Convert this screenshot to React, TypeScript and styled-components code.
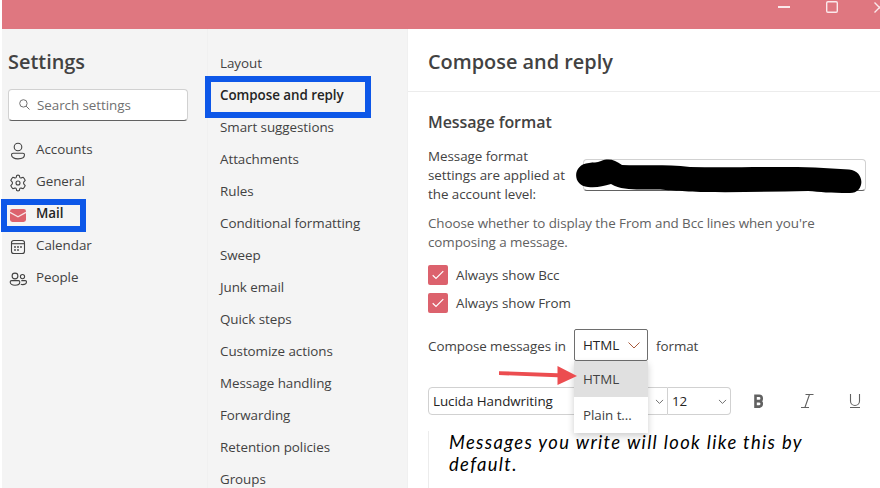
import React, { useState } from 'react';
import styled, { createGlobalStyle, css } from 'styled-components';

const GlobalStyle = createGlobalStyle`
  * {
    box-sizing: border-box;
  }
  body {
    margin: 0;
    overflow: hidden;
    background: #fff;
    color: #424242;
    font-family: 'Open Sans', 'Noto Sans', sans-serif;
    font-size: 13.4px;
    letter-spacing: -0.05px;
  }
  h1, h2, p {
    margin: 0;
  }
`;

const Window = styled.div`
  position: relative;
  display: grid;
  grid-template-rows: 29px 459px;
  width: 880px;
  height: 488px;
  padding-left: 2px;
  overflow: hidden;
`;

const TitleBar = styled.header`
  display: flex;
  justify-content: flex-end;
  background: #df7780;
  overflow: hidden;

  svg {
    flex: none;
    width: 108px;
    height: 20px;
  }
`;

const Body = styled.div`
  display: grid;
  grid-template-columns: 206px 200px 1fr;
`;

const Sidebar = styled.aside`
  padding: 20px 20px 0 6px;
  background: #f4f4f4;
  border-right: 1px solid #f0f0f0;
`;

const Heading = styled.h1`
  height: 26px;
  line-height: 26px;
  font-size: 19.9px;
  font-weight: 600;
  letter-spacing: 0;
  white-space: nowrap;
`;

const SearchBox = styled.div`
  display: flex;
  align-items: center;
  gap: 7px;
  width: 180px;
  height: 32px;
  margin-top: 14px;
  padding-left: 10px;
  border: 1px solid #d1d1d1;
  border-bottom-color: #616161;
  border-radius: 4px;
  background: #fff;
  color: #707070;

  svg {
    margin-top: -1px;
  }
`;

const SideNav = styled.nav`
  margin-top: 12px;
`;

const SideItem = styled.div<{ active?: boolean }>`
  display: flex;
  align-items: center;
  gap: 8px;
  height: 32px;
  padding-left: 1px;

  svg {
    flex: none;
    position: relative;
    top: 2px;
  }

  ${(props) =>
    props.active &&
    css`
      color: #242424;
      font-weight: 600;
    `}
`;

const SubNav = styled.nav`
  padding: 18px 0 0 12px;
  background: #f4f4f4;
  border-right: 1px solid #f0f0f0;
`;

const SubItem = styled.div<{ active?: boolean }>`
  height: 32px;
  line-height: 32px;
  white-space: nowrap;

  ${(props) =>
    props.active &&
    css`
      color: #242424;
      font-weight: 600;
    `}
`;

const Main = styled.main`
  display: grid;
  grid-template-rows: 63px 1fr;
  min-width: 0;
  background: #fff;
`;

const MainHeader = styled.div`
  padding: 20px 0 0 20px;
  border-bottom: 1px solid #ececec;
`;

const Content = styled.section`
  padding: 19px 0 0 20px;
`;

const SectionTitle = styled.h2`
  height: 22px;
  line-height: 22px;
  font-size: 16px;
  font-weight: 600;
`;

const AccountRow = styled.div`
  display: flex;
  align-items: flex-start;
  gap: 13px;
  margin-top: 14px;
`;

const AccountLabel = styled.p`
  width: 142px;
  line-height: 19px;
  white-space: nowrap;
`;

const AccountField = styled.div`
  position: relative;
  width: 283px;
  height: 32px;
  margin-top: 12px;
  border: 1px solid #d1d1d1;
  border-bottom-color: #616161;
  border-radius: 4px;

  svg {
    position: absolute;
    left: -9px;
    top: -2px;
  }
`;

const Hint = styled.p`
  margin-top: 10px;
  line-height: 19px;
  color: #616161;
  letter-spacing: -0.07px;
  white-space: nowrap;
`;

const CheckRow = styled.div`
  display: flex;
  align-items: center;
  gap: 8px;
  height: 20px;
  margin-top: 8px;
`;

const CheckList = styled.div`
  margin-top: 13px;
`;

const CheckBox = styled.span`
  display: grid;
  place-items: center;
  width: 20px;
  height: 20px;
  border-radius: 2px;
  background: #dc626d;
`;

const FormatRow = styled.div`
  display: flex;
  align-items: center;
  height: 32px;
  margin-top: 16px;
  white-space: nowrap;
`;

const FormatLabel = styled.span<{ width?: number }>`
  width: ${(props) => (props.width ? `${props.width}px` : 'auto')};
  padding-top: 2px;
`;

const Select = styled.div`
  position: relative;
  display: flex;
  align-items: center;
  justify-content: space-between;
  width: 74px;
  height: 32px;
  margin-right: 8px;
  padding: 0 6px 0 8px;
  border: 1px solid #6e6e6e;
  border-radius: 2px;
  color: #242424;
`;

const Menu = styled.div`
  position: absolute;
  z-index: 2;
  top: 31px;
  left: -1px;
  width: 74px;
  background: #fff;
  box-shadow: 0 3px 7px rgba(0, 0, 0, 0.2);
`;

const MenuItem = styled.div<{ active?: boolean }>`
  height: 36px;
  padding-left: 9px;
  line-height: 36px;
  color: #424242;
  background: ${(props) => (props.active ? '#e0e0e0' : '#fff')};
`;

const Toolbar = styled.div`
  display: flex;
  align-items: center;
  height: 28px;
  margin-top: 26px;
`;

const Combo = styled.div<{ width: number; side: 'left' | 'right' }>`
  display: flex;
  align-items: center;
  justify-content: space-between;
  width: ${(props) => props.width}px;
  height: 28px;
  padding: 0 3px 0 4px;
  border: 1px solid #d1d1d1;
  border-radius: ${(props) => (props.side === 'left' ? '4px 0 0 4px' : '0 4px 4px 0')};
  border-left-width: ${(props) => (props.side === 'left' ? 1 : 0)}px;
  color: #242424;
`;

const Tools = styled.div`
  display: flex;
  margin-left: 18px;
  gap: 28px;
`;

const Editor = styled.div`
  height: 57px;
  margin-top: 16px;
  padding: 0 0 0 20px;
  border-left: 1px solid #ececec;
`;

const Sample = styled.p`
  color: #000;
  font-family: 'Lucida Handwriting', Lato, cursive;
  font-size: 18.4px;
  font-style: italic;
  line-height: 22px;
  letter-spacing: 1.35px;
  white-space: nowrap;
`;

const Frame = styled.div<{ x: number; y: number; w: number; h: number }>`
  position: absolute;
  left: ${(props) => props.x}px;
  top: ${(props) => props.y}px;
  width: ${(props) => props.w}px;
  height: ${(props) => props.h}px;
  border: 6px solid #0d57e8;
`;

const Arrow = styled.svg`
  position: absolute;
  z-index: 3;
  left: 498px;
  top: 364px;
`;

function Chevron({ size, color }: { size: number; color: string }) {
  return (
    <svg width={size} height={size} viewBox="0 0 14 14" fill="none">
      <path d="M1.5 4.5 7 10l5.5-5.5" stroke={color} strokeWidth={14 / size} />
    </svg>
  );
}

function SideIcon({ name }: { name: string }) {
  const line = { fill: 'none', stroke: '#424242', strokeWidth: 1.1 };
  return (
    <svg width="19" height="18" viewBox="0 0 19 18">
      {name === 'Accounts' && (
        <g {...line}>
          <circle cx="9" cy="5" r="3.8" />
          <path d="M4.2 11.2h9.6c1 0 1.7.7 1.7 1.6 0 2.5-2.7 4.1-6.5 4.1s-6.5-1.6-6.5-4.1c0-.9.7-1.6 1.7-1.6Z" />
        </g>
      )}
      {name === 'General' && (
        <g {...line} strokeLinejoin="round">
          <path d="M7.7 1.4Q9 .9 10.3 1.4L10.7 3.2Q11.2 4.1 12.2 3.9L14.2 3.3Q15.5 4.5 16.2 6.4L14.9 7.8Q14.1 9 14.9 10.2L16.2 11.6Q15.5 13.5 14.2 14.7L12.2 14.1Q11.2 13.9 10.7 14.8L10.3 16.6Q9 17.1 7.7 16.6L7.3 14.8Q6.8 13.9 5.8 14.1L3.8 14.7Q2.5 13.5 1.8 11.6L3.1 10.2Q3.9 9 3.1 7.8L1.8 6.4Q2.5 4.5 3.8 3.3L5.8 3.9Q6.8 4.1 7.3 3.2Z" />
          <circle cx="9" cy="9" r="2" />
        </g>
      )}
      {name === 'Mail' && (
        <g>
          <rect x="1" y="3" width="16" height="13" rx="2.4" fill="#dc626d" />
          <path d="m1 6.4 8 4.4 8-4.4" fill="none" stroke="#f7e3e5" strokeWidth="1.2" />
        </g>
      )}
      {name === 'Calendar' && (
        <g {...line}>
          <rect x="2.5" y="2.5" width="13" height="13" rx="2.3" />
          <path d="M2.5 5.7h13" />
          <g fill="#424242" stroke="none">
            <circle cx="6" cy="9" r=".9" />
            <circle cx="9" cy="9" r=".9" />
            <circle cx="12" cy="9" r=".9" />
            <circle cx="6" cy="12" r=".9" />
            <circle cx="9" cy="12" r=".9" />
          </g>
        </g>
      )}
      {name === 'People' && (
        <g {...line}>
          <circle cx="6" cy="6" r="2.9" />
          <circle cx="13.5" cy="6.6" r="2.1" />
          <path d="M2.5 10.6h7c.8 0 1.3.5 1.3 1.3 0 2-1.9 3.3-4.8 3.3s-4.8-1.3-4.8-3.3c0-.8.5-1.3 1.3-1.3ZM12.3 10.6h4c.7 0 1.2.5 1.2 1.2 0 1.8-1.6 2.8-3.9 2.8-.7 0-1.3-.1-1.8-.3" />
        </g>
      )}
    </svg>
  );
}

const sections = ['Accounts', 'General', 'Mail', 'Calendar', 'People'];

const mailPages = [
  'Layout',
  'Compose and reply',
  'Smart suggestions',
  'Attachments',
  'Rules',
  'Conditional formatting',
  'Sweep',
  'Junk email',
  'Quick steps',
  'Customize actions',
  'Message handling',
  'Forwarding',
  'Retention policies',
  'Groups',
];

function App() {
  const [section, setSection] = useState('Mail');
  const [page, setPage] = useState('Compose and reply');

  return (
    <>
      <GlobalStyle />
      <Window>
        <TitleBar>
          <svg viewBox="0 0 108 20" fill="none" stroke="#fbe9eb" strokeWidth="1.4">
            <path d="M6 7h12" strokeWidth="2" />
            <rect x="54.7" y="1.7" width="10.6" height="10.6" rx="1.2" />
            <path d="m102.5 2.5 10 10m0-10-10 10" />
          </svg>
        </TitleBar>
        <Body>
          <Sidebar>
            <Heading>Settings</Heading>
            <SearchBox>
              <svg width="11" height="11" viewBox="0 0 11 11" fill="none" stroke="#707070">
                <circle cx="4.4" cy="4.4" r="3.7" />
                <path d="m7.1 7.1 3.4 3.4" />
              </svg>
              Search settings
            </SearchBox>
            <SideNav>
              {sections.map((s) => (
                <SideItem key={s} active={s === section} onClick={() => setSection(s)}>
                  <SideIcon name={s} />
                  {s}
                </SideItem>
              ))}
            </SideNav>
          </Sidebar>
          <SubNav>
            {mailPages.map((p) => (
              <SubItem key={p} active={p === page} onClick={() => setPage(p)}>
                {p}
              </SubItem>
            ))}
          </SubNav>
          <Main>
            <MainHeader>
              <Heading>Compose and reply</Heading>
            </MainHeader>
            <Content>
              <SectionTitle>Message format</SectionTitle>
              <AccountRow>
                <AccountLabel>
                  Message format
                  <br />
                  settings are applied at
                  <br />
                  the account level:
                </AccountLabel>
                <AccountField>
                  {/* account address is blacked out */}
                  <svg width="290" height="36" viewBox="0 0 290 36">
                    <path d="M14 5C18 4 22 5 26 3 34 0 40 2 47 7 65 8 90 6 115 9 160 10 200 8 240 9.5L274 11.5C291 13 290 36 274 35 255 35 245 34 233 33 200 33.5 165 34.5 130 34 105 33.5 95 32 80 31.5 62 31 48 33 36 26 28 28 22 30 13 29-3 28-3 6 14 5Z" />
                  </svg>
                </AccountField>
              </AccountRow>
              <Hint>
                Choose whether to display the From and Bcc lines when you're
                <br />
                composing a message.
              </Hint>
              <CheckList>
                {['Always show Bcc', 'Always show From'].map((label) => (
                  <CheckRow key={label}>
                    <CheckBox>
                      <svg width="12" height="10" viewBox="0 0 12 10" fill="none">
                        <path d="M.7 5.3 4 8.5 11.3 1.2" stroke="#fff" strokeWidth="1.2" />
                      </svg>
                    </CheckBox>
                    {label}
                  </CheckRow>
                ))}
              </CheckList>
              <FormatRow>
                <FormatLabel width={146}>Compose messages in</FormatLabel>
                <Select>
                  HTML
                  <Chevron size={14} color="#a85a3c" />
                  <Menu>
                    <MenuItem active>HTML</MenuItem>
                    <MenuItem>Plain t...</MenuItem>
                  </Menu>
                </Select>
                <FormatLabel>format</FormatLabel>
              </FormatRow>
              <Toolbar>
                <Combo width={240} side="left">
                  Lucida Handwriting
                  <Chevron size={9} color="#707070" />
                </Combo>
                <Combo width={63} side="right">
                  12
                  <Chevron size={9} color="#707070" />
                </Combo>
                <Tools>
                  <svg width="20" height="20" viewBox="0 0 20 20" fill="none" stroke="#616161" strokeWidth="2.6">
                    <path d="M6.5 4.8v10.8h4a2.8 2.8 0 0 0 0-5.5H6.5h3.6a2.6 2.6 0 0 0 0-5.3Z" />
                  </svg>
                  <svg width="20" height="20" viewBox="0 0 20 20" fill="none" stroke="#616161" strokeWidth="1.1">
                    <path d="M8.5 3.5h8M4 16.5h8M12.5 3.5l-4.6 13" />
                  </svg>
                  <svg width="20" height="20" viewBox="0 0 20 20" fill="none" stroke="#616161" strokeWidth="1.1">
                    <path d="M5.5 3v7a4.5 4.5 0 0 0 9 0V3M5 16.5h10" />
                  </svg>
                </Tools>
              </Toolbar>
              <Editor>
                <Sample>
                  Messages you write will look like this by
                  <br />
                  default.
                </Sample>
              </Editor>
            </Content>
          </Main>
        </Body>
        <Frame x={1} y={199} w={85} h={33} />
        <Frame x={205} y={76} w={166} h={42} />
        <Arrow width="80" height="24" viewBox="0 0 80 24">
          <path d="M1 7.2 59.5 9.3V2L79 12 59.5 21V13.3L1 11Z" fill="#ec4d50" />
        </Arrow>
      </Window>
    </>
  );
}

export default App;
